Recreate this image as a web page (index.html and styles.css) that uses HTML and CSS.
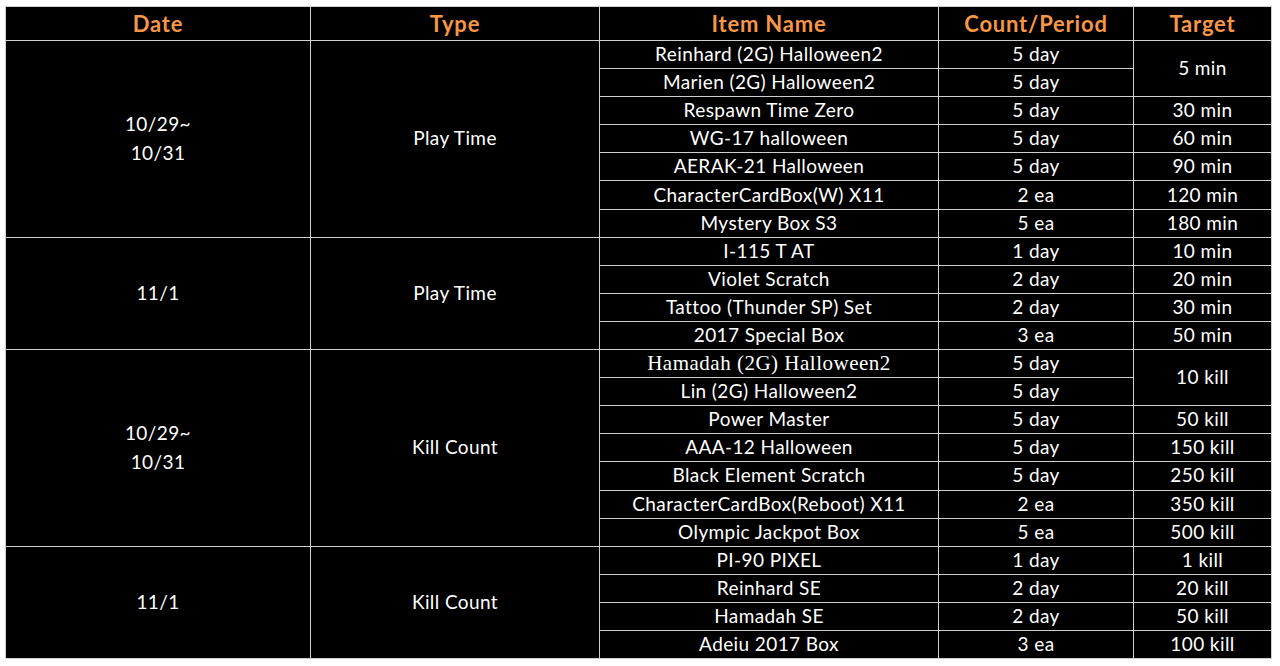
FILE: index.html
```html
<!DOCTYPE html>
<html lang="en">
<head>
<meta charset="utf-8">
<title>Event Rewards</title>
<link rel="stylesheet" href="styles.css">
</head>
<body>
<table class="rewards">
  <colgroup>
    <col class="c-date"><col class="c-type"><col class="c-item"><col class="c-count"><col class="c-target">
  </colgroup>
  <thead>
    <tr><th>Date</th><th>Type</th><th>Item Name</th><th>Count/Period</th><th>Target</th></tr>
  </thead>
  <tbody>
    <tr><td rowspan="7" class="date">10/29~<br>10/31</td><td rowspan="7">Play Time</td><td>Reinhard (2G) Halloween2</td><td>5 day</td><td rowspan="2">5 min</td></tr>
    <tr><td>Marien (2G) Halloween2</td><td>5 day</td></tr>
    <tr><td>Respawn Time Zero</td><td>5 day</td><td>30 min</td></tr>
    <tr><td>WG-17 halloween</td><td>5 day</td><td>60 min</td></tr>
    <tr><td>AERAK-21 Halloween</td><td>5 day</td><td>90 min</td></tr>
    <tr><td>CharacterCardBox(W) X11</td><td>2 ea</td><td>120 min</td></tr>
    <tr><td>Mystery Box S3</td><td>5 ea</td><td>180 min</td></tr>

    <tr><td rowspan="4">11/1</td><td rowspan="4">Play Time</td><td>I-115 T AT</td><td>1 day</td><td>10 min</td></tr>
    <tr><td>Violet Scratch</td><td>2 day</td><td>20 min</td></tr>
    <tr><td>Tattoo (Thunder SP) Set</td><td>2 day</td><td>30 min</td></tr>
    <tr><td>2017 Special Box</td><td>3 ea</td><td>50 min</td></tr>

    <tr><td rowspan="7" class="date">10/29~<br>10/31</td><td rowspan="7">Kill Count</td><td class="serif">Hamadah (2G) Halloween2</td><td>5 day</td><td rowspan="2">10 kill</td></tr>
    <tr><td>Lin (2G) Halloween2</td><td>5 day</td></tr>
    <tr><td>Power Master</td><td>5 day</td><td>50 kill</td></tr>
    <tr><td>AAA-12 Halloween</td><td>5 day</td><td>150 kill</td></tr>
    <tr><td>Black Element Scratch</td><td>5 day</td><td>250 kill</td></tr>
    <tr><td>CharacterCardBox(Reboot) X11</td><td>2 ea</td><td>350 kill</td></tr>
    <tr><td>Olympic Jackpot Box</td><td>5 ea</td><td>500 kill</td></tr>

    <tr><td rowspan="4">11/1</td><td rowspan="4">Kill Count</td><td>PI-90 PIXEL</td><td>1 day</td><td>1 kill</td></tr>
    <tr><td>Reinhard SE</td><td>2 day</td><td>20 kill</td></tr>
    <tr><td>Hamadah SE</td><td>2 day</td><td>50 kill</td></tr>
    <tr><td>Adeiu 2017 Box</td><td>3 ea</td><td>100 kill</td></tr>
  </tbody>
</table>
</body>
</html>
```

FILE: styles.css
```css
html, body {
  margin: 0;
  padding: 0;
  background: #ffffff;
}
body {
  padding: 6px 0 0 5px;
}
.rewards {
  border-collapse: collapse;
  table-layout: fixed;
  width: 1266px;
  background: #000000;
  color: #ffffff;
  font-family: Lato, "Open Sans", "Liberation Sans", sans-serif;
  font-size: 19px;
  letter-spacing: 0.4px;
  border: 1px solid #8a8a8a;
}
.c-date { width: 305px; }
.c-type { width: 289px; }
.c-item { width: 339px; }
.c-count { width: 195px; }
.c-target { width: 138px; }

.rewards th,
.rewards td {
  border: 1px solid #cfcfcf;
  text-align: center;
  vertical-align: middle;
  padding: 0;
  white-space: nowrap;
}
.rewards th {
  height: 33px;
  color: #f79646;
  font-size: 22px;
  font-weight: 700;
  letter-spacing: 0.8px;
}
.rewards td {
  height: 26.1px;
  line-height: 26px;
  padding-bottom: 1px;
}
.rewards td.date {
  line-height: 29px;
}
.rewards td.serif {
  font-family: "Liberation Serif", "DejaVu Serif", serif;
  font-size: 21px;
  letter-spacing: 0.5px;
}
```
